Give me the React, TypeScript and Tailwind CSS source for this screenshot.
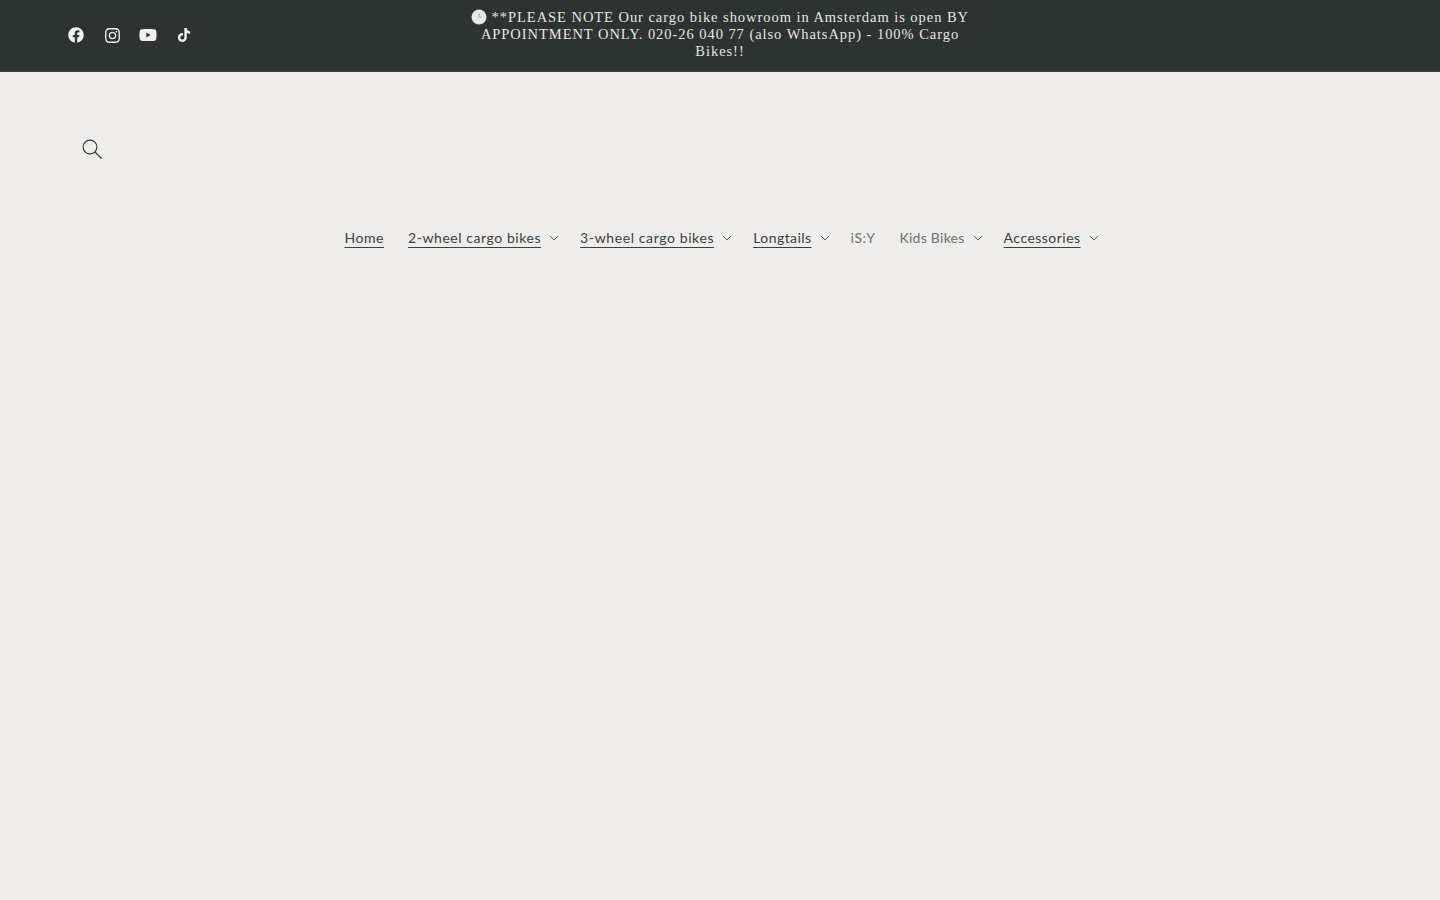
import { FaFacebook, FaInstagram, FaTiktok, FaYoutube } from "react-icons/fa";

const navItems = [
  { label: "Home", underline: true, sub: false, tracking: "tracking-[0.56px]" },
  { label: "2-wheel cargo bikes", underline: true, sub: true, tracking: "tracking-[0.56px]" },
  { label: "3-wheel cargo bikes", underline: true, sub: true, tracking: "tracking-[0.61px]" },
  { label: "Longtails", underline: true, sub: true, tracking: "tracking-[0.45px]" },
  { label: "iS:Y", underline: false, sub: false, tracking: "tracking-[0.56px]" },
  { label: "Kids Bikes", underline: false, sub: true, tracking: "tracking-[0.26px]" },
  { label: "Accessories", underline: true, sub: true, tracking: "tracking-[0.47px]" },
];

function ClockEmoji() {
  return (
    <svg viewBox="0 0 16 16" className="inline-block w-[16px] h-[16px] align-[-3px]">
      <circle cx="8" cy="8" r="7.5" fill="#e6e8ea" />
      <path d="M8 4.5V8h2.5" fill="none" stroke="#8b9095" strokeWidth="0.8" />
    </svg>
  );
}

function Chevron() {
  return (
    <svg viewBox="0 0 10 6" fill="none" className="absolute right-[9px] top-[20px] w-[10px] h-[6px] text-[#4a4f4d]">
      <path d="M1 1l4 4 4-4" stroke="currentColor" strokeWidth="0.9" />
    </svg>
  );
}

export default function App() {
  return (
    <div className="min-h-[900px] bg-[#eeedeb]">
      {/* Announcement bar */}
      <div className="h-[72px] bg-[#2d3330] flex items-center justify-between pl-[58px] pr-[50px] pb-[1px] border-b border-[#3a403d]">
        <div className="flex w-[402px] shrink-0 text-[#f2f2f0]">
          <a className="w-[36px] h-[36px] flex items-center justify-center"><FaFacebook size={16} /></a>
          <a className="w-[36px] h-[36px] flex items-center justify-center"><FaInstagram size={17} /></a>
          <a className="w-[36px] h-[36px] flex items-center justify-center"><FaYoutube size={18} /></a>
          <a className="w-[36px] h-[36px] flex items-center justify-center"><FaTiktok size={14} /></a>
        </div>
        <p className="w-[520px] mb-[2px] shrink-0 text-center text-[#e6e7e5] text-[14.5px] leading-[17px] tracking-[0.95px] font-['Liberation_Serif',serif]">
          <ClockEmoji /> **PLEASE NOTE Our cargo bike showroom in Amsterdam is open BY APPOINTMENT ONLY. 020-26 040 77 (also WhatsApp) - 100% Cargo Bikes!!
        </p>
        <div className="w-[410px] shrink-0" />
      </div>

      {/* Header */}
      <div className="px-[70px] pt-[55px] h-[144px]">
        <button className="w-[44px] h-[44px] flex items-center justify-center text-[#2d3330]">
          <svg viewBox="0 0 20 20" fill="none" className="w-[20px] h-[20px]">
            <circle cx="8" cy="8" r="6.9" stroke="currentColor" strokeWidth="1.1" />
            <path d="M13 13l6.5 6.5" stroke="currentColor" strokeWidth="1.1" />
          </svg>
        </button>
      </div>

      <nav className="flex justify-center -mt-[1px] font-['Lato',sans-serif] text-[14px]">
        {navItems.map((item) => (
          <a
            key={item.label}
            className={`relative h-[44px] flex items-center pl-[12px] ${item.tracking} ${item.sub ? "pr-[27px]" : "pr-[12px]"} ${item.underline ? "text-[#3b403e]" : "text-[#6d716f]"}`}
          >
            <span className={item.underline ? "underline underline-offset-[4px] decoration-1" : ""}>{item.label}</span>
            {item.sub && <Chevron />}
          </a>
        ))}
      </nav>
    </div>
  );
}
